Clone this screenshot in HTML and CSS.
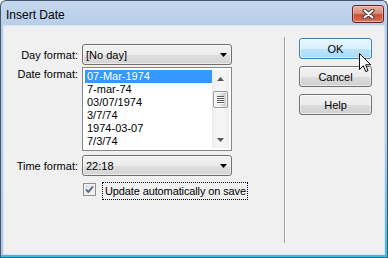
FILE: index.html
```html
<!DOCTYPE html>
<html>
<head>
<meta charset="utf-8">
<link rel="stylesheet" href="styles.css">
</head>
<body>
<div class="window">
  <div class="titlebar">
    <span class="title">Insert Date</span>
    <div class="close">
      <svg width="13" height="10" viewBox="0 0 13 10">
        <path d="M2.5 1.5 L10.5 8.5 M10.5 1.5 L2.5 8.5" stroke="#3a3a3a" stroke-width="4" stroke-linecap="round"/>
        <path d="M2.5 1.5 L10.5 8.5 M10.5 1.5 L2.5 8.5" stroke="#ffffff" stroke-width="2" stroke-linecap="round"/>
      </svg>
    </div>
  </div>
  <div class="client">
    <div class="form">
      <div class="row row-center">
        <span class="label">Day format:</span>
        <div class="select"><span>[No day]</span><svg class="drop" width="7" height="4" viewBox="0 0 7 4"><polygon points="0,0 7,0 3.5,4" fill="#000"/></svg></div>
      </div>
      <div class="row row-top gap-list">
        <span class="label">Date format:</span>
        <div class="list">
          <div class="items">
            <div class="item sel">07-Mar-1974</div>
            <div class="item">7-mar-74</div>
            <div class="item">03/07/1974</div>
            <div class="item">3/7/74</div>
            <div class="item">1974-03-07</div>
            <div class="item">7/3/74</div>
          </div>
          <div class="sb">
            <div class="sb-btn"><svg width="7" height="4" viewBox="0 0 7 4"><polygon points="0,4 7,4 3.5,0" fill="#555"/></svg></div>
            <div class="thumb"><div class="grip"></div></div>
            <div class="sb-space"></div>
            <div class="sb-btn"><svg width="7" height="4" viewBox="0 0 7 4"><polygon points="0,0 7,0 3.5,4" fill="#555"/></svg></div>
          </div>
        </div>
      </div>
      <div class="row row-center gap-time">
        <span class="label">Time format:</span>
        <div class="select"><span>22:18</span><svg class="drop" width="7" height="4" viewBox="0 0 7 4"><polygon points="0,0 7,0 3.5,4" fill="#000"/></svg></div>
      </div>
      <div class="check-row">
        <div class="checkbox">
          <svg width="11" height="11" viewBox="0 0 11 11"><path d="M2 5.5 L4.3 8 L9 2.5" fill="none" stroke="#4a5e8c" stroke-width="1.8"/></svg>
        </div>
        <span class="check-label">Update automatically on save</span>
      </div>
    </div>
    <div class="sep"></div>
    <div class="buttons">
      <div class="btn ok">OK</div>
      <div class="btn">Cancel</div>
      <div class="btn">Help</div>
    </div>
  </div>
</div>
<svg class="cursor" width="13" height="20" viewBox="0 0 13 20">
  <path d="M0.5 0.5 V16.5 L4.3 12.8 L6.8 18.6 L9 17.6 L6.6 11.8 H11.8 Z" fill="#fff" stroke="#000" stroke-width="1" stroke-linejoin="miter"/>
</svg>
</body>
</html>
```
FILE: styles.css
```css
* { box-sizing: border-box; }
body {
  margin: 0;
  font-family: "Liberation Sans", Arial, sans-serif;
  font-size: 11px;
  color: #000;
}
.window {
  width: 388px;
  height: 258px;
  border: 1px solid #44576e;
  border-bottom-color: #1d6f8f;
  border-radius: 6px 6px 0 0;
  padding: 0 2px 2px 2px;
  background:
    linear-gradient(#37bee8, #37bee8) left bottom / 100% 2px no-repeat,
    linear-gradient(to bottom, rgba(55,190,232,0) 55%, #37bee8 100%) right top / 2px 100% no-repeat,
    linear-gradient(to bottom, #c4d7ed 0px, #b8cfe9 24px, #aec8e5 100%);
  display: flex;
  flex-direction: column;
  overflow: hidden;
}
.titlebar {
  height: 24px;
  flex: none;
  display: flex;
  align-items: flex-start;
  padding: 7px 1px 0 3px;
}
.title {
  font-size: 12px;
  line-height: 14px;
  color: #000;
}
.close {
  margin-left: auto;
  margin-top: -3px;
  width: 32px;
  height: 18px;
  border: 1px solid #6a2320;
  border-radius: 3px;
  background: linear-gradient(to bottom, #eab0a2 0%, #dc8c78 45%, #c7503a 55%, #d0654c 85%, #e08d73 100%);
  box-shadow: inset 0 0 0 1px rgba(255,220,210,0.45);
  display: flex;
  align-items: center;
  justify-content: center;
}
.client {
  flex: 1;
  background: #f0f0f0;
  border: 1px solid #dbe5f0;
  display: flex;
  align-items: flex-start;
  padding-top: 11px;
}
.form {
  margin-top: 7px;
  width: 228px;
  display: flex;
  flex-direction: column;
}
.row {
  display: flex;
  gap: 4px;
}
.row-center { align-items: center; }
.row-top { align-items: flex-start; }
.gap-list { margin-top: 2px; }
.gap-time { margin-top: 4px; }
.label {
  width: 74px;
  text-align: right;
  line-height: 14px;
  white-space: nowrap;
}
.select {
  width: 150px;
  height: 21px;
  border: 1px solid #707070;
  border-radius: 3px;
  background: linear-gradient(to bottom, #f3f3f3 0%, #ececec 50%, #dfdfdf 52%, #d4d4d4 100%);
  box-shadow: inset 0 0 0 1px rgba(255,255,255,0.55);
  display: flex;
  align-items: center;
  padding: 0 4px 0 3px;
  line-height: 14px;
}
.drop { margin-left: auto; }
.list {
  width: 150px;
  height: 84px;
  border: 1px solid #828790;
  background: #fff;
  padding: 2px;
  display: flex;
}
.items { width: 127px; }
.item {
  height: 13px;
  line-height: 13px;
  padding-left: 2px;
  white-space: nowrap;
}
.item.sel {
  background: #3399ff;
  color: #fff;
}
.sb {
  width: 17px;
  height: 78px;
  background: linear-gradient(to right, #ececec, #f6f6f6 30%, #f6f6f6 70%, #ececec);
  display: flex;
  flex-direction: column;
  align-items: center;
}
.sb-btn {
  width: 17px;
  height: 17px;
  display: flex;
  align-items: center;
  justify-content: center;
  flex: none;
}
.thumb {
  margin-top: 4px;
  width: 15px;
  height: 17px;
  border: 1px solid #979797;
  border-radius: 2px;
  background: linear-gradient(to right, #f4f4f4, #e8e8e8 50%, #d8d8d8 51%, #cfcfcf);
  box-shadow: inset 0 0 0 1px rgba(255,255,255,0.7);
  display: flex;
  align-items: center;
  justify-content: center;
  flex: none;
}
.grip {
  width: 7px;
  height: 8px;
  background: repeating-linear-gradient(to bottom, #5a5a5a 0px, #5a5a5a 1px, #ffffff 1px, #ffffff 2px);
}
.sb-space { flex: 1; }
.check-row {
  margin-top: 6px;
  margin-left: 78px;
  display: flex;
  align-items: flex-start;
}
.checkbox {
  margin-top: 1px;
  margin-left: 1px;
  width: 13px;
  height: 13px;
  border: 1px solid #8f8f8f;
  background: linear-gradient(135deg, #dcdcdc, #f6f6f6);
  box-shadow: inset 0 0 0 1px #f4f4f4;
  display: flex;
  align-items: center;
  justify-content: center;
  flex: none;
}
.check-label {
  margin-left: 6px;
  border: 1px dotted #000;
  padding: 1px 1px 0 2px;
  height: 18px;
  line-height: 15px;
  letter-spacing: -0.12px;
  white-space: nowrap;
}
.sep {
  margin-left: 52px;
  width: 2px;
  height: 206px;
  border-left: 1px solid #a0a0a0;
  border-right: 1px solid #ffffff;
  flex: none;
}
.buttons {
  margin-left: 13px;
  margin-top: 1px;
  display: flex;
  flex-direction: column;
  gap: 7px;
}
.btn {
  width: 73px;
  height: 21px;
  border: 1px solid #707070;
  border-radius: 3px;
  background: linear-gradient(to bottom, #f2f2f2 0%, #ebebeb 50%, #dddddd 51%, #cfcfcf 100%);
  box-shadow: inset 0 0 0 1px rgba(255,255,255,0.6);
  display: flex;
  align-items: center;
  justify-content: center;
  line-height: 14px;
}
.btn.ok {
  border-color: #3c7fb1;
  background: linear-gradient(to bottom, #eaf6fd 0%, #d9f0fc 50%, #bee6fd 51%, #a7d9f5 100%);
}
.cursor {
  position: absolute;
  left: 359px;
  top: 53px;
}
```
